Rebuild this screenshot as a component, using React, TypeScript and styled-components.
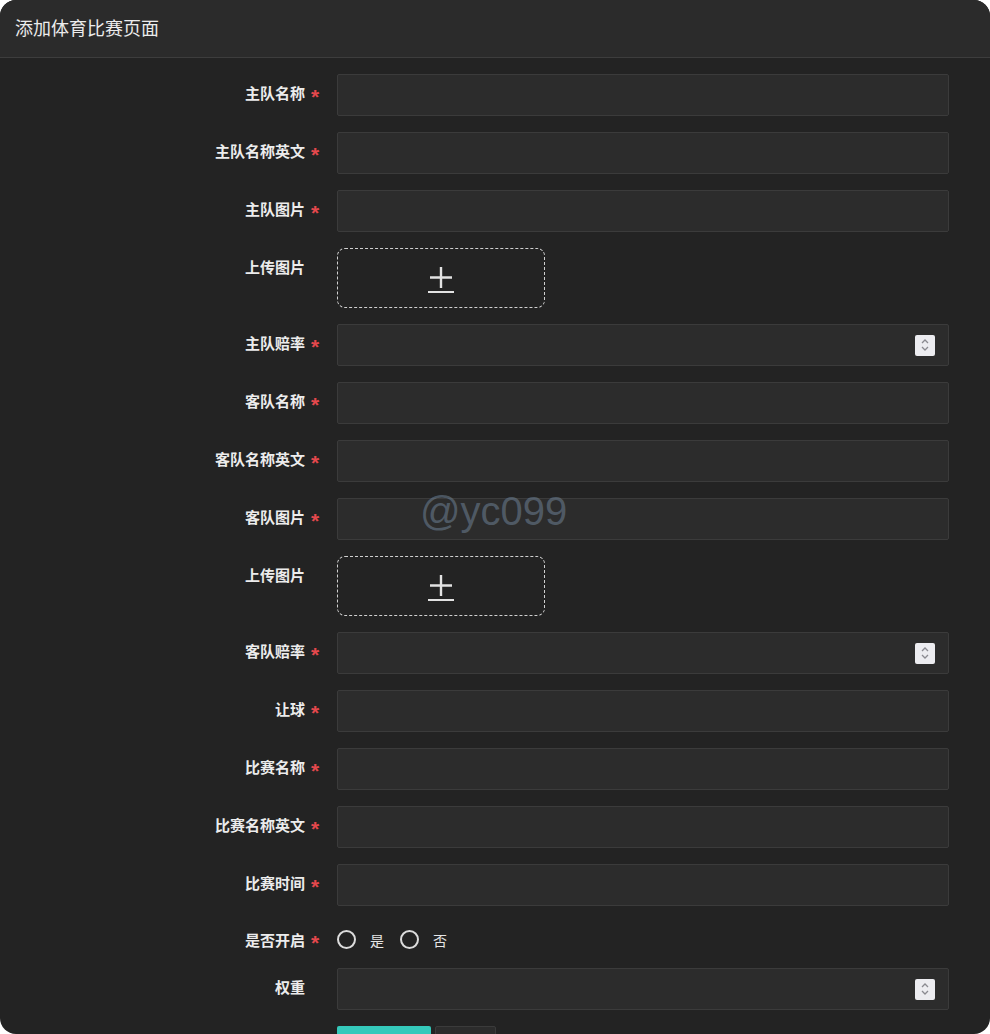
import styled, { createGlobalStyle } from 'styled-components'

const GlobalStyle = createGlobalStyle`
  html, body {
    margin: 0;
    padding: 0;
    background: #ffffff;
  }
  body {
    font-family: "Noto Sans CJK SC", "Noto Sans", sans-serif;
  }
  * {
    box-sizing: border-box;
  }
`

type Field = {
  label: string
  required?: boolean
  kind: 'text' | 'number' | 'upload' | 'radio'
}

const fields: Field[] = [
  { label: '主队名称', required: true, kind: 'text' },
  { label: '主队名称英文', required: true, kind: 'text' },
  { label: '主队图片', required: true, kind: 'text' },
  { label: '上传图片', kind: 'upload' },
  { label: '主队赔率', required: true, kind: 'number' },
  { label: '客队名称', required: true, kind: 'text' },
  { label: '客队名称英文', required: true, kind: 'text' },
  { label: '客队图片', required: true, kind: 'text' },
  { label: '上传图片', kind: 'upload' },
  { label: '客队赔率', required: true, kind: 'number' },
  { label: '让球', required: true, kind: 'text' },
  { label: '比赛名称', required: true, kind: 'text' },
  { label: '比赛名称英文', required: true, kind: 'text' },
  { label: '比赛时间', required: true, kind: 'text' },
  { label: '是否开启', required: true, kind: 'radio' },
  { label: '权重', kind: 'number' },
]

function PlusIcon() {
  return (
    <svg width="28" height="28" viewBox="0 0 28 28" fill="none">
      <path d="M14 1v21M3 11.5h22" stroke="#e2e2e2" strokeWidth="2.4" />
      <path d="M1 26h26" stroke="#e2e2e2" strokeWidth="2" />
    </svg>
  )
}

function SpinIcon() {
  return (
    <svg width="10" height="14" viewBox="0 0 10 14" fill="none">
      <path d="M2 5l3-3 3 3M2 9l3 3 3-3" stroke="#8a8a90" strokeWidth="1.3" />
    </svg>
  )
}

function FieldControl({ field }: { field: Field }) {
  if (field.kind === 'upload') {
    return (
      <UploadBox>
        <PlusIcon />
      </UploadBox>
    )
  }
  if (field.kind === 'radio') {
    return (
      <RadioGroup>
        <RadioItem>
          <RadioCircle />
          <span>是</span>
        </RadioItem>
        <RadioItem>
          <RadioCircle />
          <span>否</span>
        </RadioItem>
      </RadioGroup>
    )
  }
  return (
    <InputBox>
      {field.kind === 'number' && (
        <Spinner>
          <SpinIcon />
        </Spinner>
      )}
    </InputBox>
  )
}

export default function App() {
  return (
    <>
      <GlobalStyle />
      <Card>
        <Header>添加体育比赛页面</Header>
        <Form>
          {fields.map((field, i) => (
            <Row key={i}>
              <LabelCell $compact={field.kind === 'radio'}>
                <LabelText>{field.label}</LabelText>
                <Mark>{field.required ? '*' : ''}</Mark>
              </LabelCell>
              <Control>
                <FieldControl field={field} />
              </Control>
            </Row>
          ))}
          <Row>
            <LabelCell />
            <Buttons>
              <PrimaryButton />
              <PlainButton />
            </Buttons>
          </Row>
        </Form>
        <Watermark>@yc099</Watermark>
      </Card>
    </>
  )
}

const Card = styled.div`
  position: relative;
  width: 990px;
  height: 1034px;
  border-radius: 16px;
  overflow: hidden;
  background: #232323;
`

const Header = styled.div`
  height: 58px;
  padding: 0 15px 3px;
  display: flex;
  align-items: center;
  background: #2b2b2b;
  border-bottom: 1px solid #3d3d3d;
  color: #ececec;
  font-size: 18px;
`

const Form = styled.div`
  display: flex;
  flex-direction: column;
  gap: 16px;
  padding: 16px 41px 0 0;
`

const Row = styled.div`
  display: flex;
  align-items: flex-start;
`

const LabelCell = styled.div<{ $compact?: boolean }>`
  width: 337px;
  flex: none;
  display: flex;
  justify-content: flex-end;
  align-items: center;
  height: ${(p) => (p.$compact ? '30px' : '42px')};
  padding-top: ${(p) => (p.$compact ? '4px' : '0')};
  padding-bottom: ${(p) => (p.$compact ? '0' : '5px')};
`

const LabelText = styled.span`
  color: #ececec;
  font-size: 15px;
  font-weight: 700;
`

const Mark = styled.span`
  width: 32px;
  padding-left: 6px;
  padding-top: 7px;
  color: #e5484d;
  font-size: 21px;
  line-height: 1;
  font-weight: 700;
  font-family: "Liberation Sans", sans-serif;
`

const Control = styled.div`
  flex: 1;
  display: flex;
`

const InputBox = styled.div`
  flex: 1;
  height: 42px;
  background: #2c2c2c;
  border: 1px solid #3b3b3b;
  border-radius: 2px;
  display: flex;
  align-items: center;
  justify-content: flex-end;
  padding-right: 13px;
`

const Spinner = styled.span`
  width: 20px;
  height: 21px;
  border-radius: 2px;
  background: #ececf0;
  display: flex;
  align-items: center;
  justify-content: center;
`

const UploadBox = styled.div`
  width: 208px;
  height: 60px;
  border: 1px dashed #d0d0d0;
  border-radius: 8px;
  display: flex;
  align-items: center;
  justify-content: center;
  padding-top: 4px;
`

const RadioGroup = styled.div`
  display: flex;
  align-items: center;
  height: 30px;
  padding-top: 5px;
  gap: 16px;
  color: #e6e6e6;
  font-size: 14px;
`

const RadioItem = styled.label`
  display: flex;
  align-items: center;
  gap: 14px;
`

const RadioCircle = styled.span`
  width: 19px;
  height: 19px;
  border-radius: 50%;
  border: 2px solid #dcdcdc;
`

const Buttons = styled.div`
  display: flex;
  gap: 4px;
`

const PrimaryButton = styled.button`
  width: 94px;
  height: 36px;
  border: none;
  border-radius: 2px;
  background: #35c9bb;
`

const PlainButton = styled.button`
  width: 61px;
  height: 36px;
  border: 1px solid #3b3b3b;
  border-radius: 2px;
  background: #2c2c2c;
`

const Watermark = styled.div`
  position: absolute;
  left: 420px;
  top: 489px;
  font-family: "Liberation Sans", Arial, sans-serif;
  font-size: 40px;
  color: rgba(110, 130, 150, 0.55);
  pointer-events: none;
`
